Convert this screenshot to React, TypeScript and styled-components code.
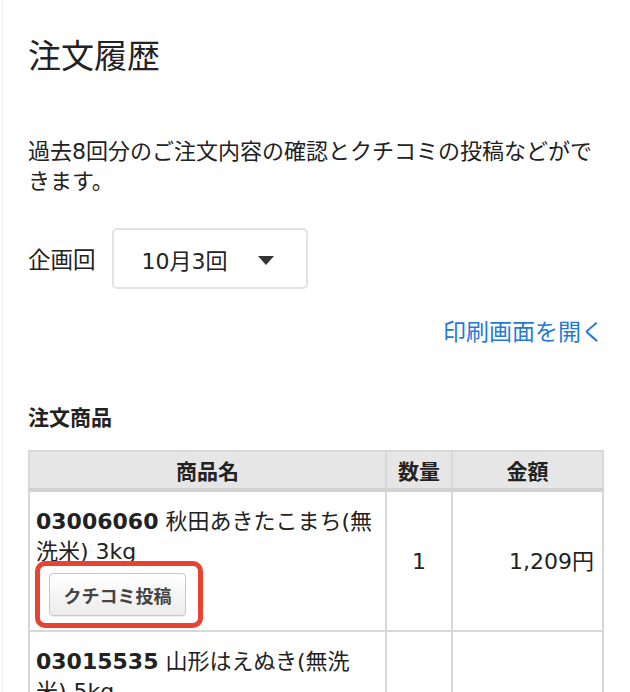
import styled, { createGlobalStyle } from "styled-components";
////////////////////////////////////////////////////////////////////////////////

const GlobalStyle = createGlobalStyle`
  html, body {
    margin: 0;
    padding: 0;
    background: #fff;
  }
  body {
    font-family: "DejaVu Sans", "Noto Sans CJK JP", sans-serif;
    color: #222;
  }
`;

type Item = {
  code: string;
  name: string;
  qty: string;
  price: string;
  highlight?: boolean;
};

const items: Item[] = [
  {
    code: "03006060",
    name: "秋田あきたこまち(無洗米) 3kg",
    qty: "1",
    price: "1,209円",
    highlight: true,
  },
  {
    code: "03015535",
    name: "山形はえぬき(無洗米) 5kg",
    qty: "1",
    price: "1,880円",
  },
];

export default function App() {
  return (
    <>
      <GlobalStyle />
      <Page>
        <Title>注文履歴</Title>
        <Lead>
          過去8回分のご注文内容の確認とクチコミの投稿などができます。
        </Lead>

        <SelectRow>
          <Label>企画回</Label>
          <Select>
            <span>10月3回</span>
            <Caret />
          </Select>
        </SelectRow>

        <LinkRow>
          <PrintLink href="#">印刷画面を開く</PrintLink>
        </LinkRow>

        <SectionTitle>注文商品</SectionTitle>

        <Table>
          <colgroup>
            <col style={{ width: 357 }} />
            <col style={{ width: 66 }} />
            <col />
          </colgroup>
          <thead>
            <tr>
              <Th>商品名</Th>
              <Th>数量</Th>
              <Th>金額</Th>
            </tr>
          </thead>
          <tbody>
            {items.map((item) => (
              <tr key={item.code}>
                <NameCell>
                  <Code>{item.code}</Code> {item.name}
                  <ButtonWrap>
                    <ReviewButton>クチコミ投稿</ReviewButton>
                    {item.highlight && <Highlight />}
                  </ButtonWrap>
                </NameCell>
                <Td $align="center">{item.qty}</Td>
                <Td $align="right">{item.price}</Td>
              </tr>
            ))}
          </tbody>
        </Table>
      </Page>
    </>
  );
}

const Page = styled.div`
  margin-left: 2px;
  border-left: 1px solid #f0f0f0;
  padding: 37px 26px 40px 25px;
  min-height: 100vh;
  box-sizing: border-box;
`;

const Title = styled.h1`
  margin: 0;
  font-size: 33px;
  font-weight: normal;
  line-height: 40px;
  color: #222;
`;

const Lead = styled.p`
  margin: 60px 0 0;
  font-size: 22px;
  line-height: 30px;
  color: #222;
`;

const SelectRow = styled.div`
  display: flex;
  align-items: center;
  gap: 16px;
  margin-top: 31px;
`;

const Label = styled.span`
  font-size: 22.5px;
  line-height: 30px;
  padding-top: 3px;
`;

const Select = styled.div`
  display: flex;
  align-items: center;
  justify-content: space-between;
  box-sizing: border-box;
  width: 196px;
  height: 61px;
  padding: 0 32px 0 28px;
  border: 2px solid #e2e2e2;
  border-radius: 5px;
  font-size: 22px;
  color: #222;
`;

const Caret = styled.span`
  width: 0;
  height: 0;
  margin-top: 4px;
  border-left: 8.5px solid transparent;
  border-right: 8.5px solid transparent;
  border-top: 9px solid #333;
`;

const LinkRow = styled.div`
  display: flex;
  justify-content: flex-end;
  margin-top: 28px;
`;

const PrintLink = styled.a`
  font-size: 23px;
  line-height: 30px;
  color: #1f7bd4;
  text-decoration: none;
`;

const SectionTitle = styled.h2`
  margin: 56px 0 0;
  font-size: 21px;
  font-weight: bold;
  line-height: 30px;
  color: #222;
`;

const Table = styled.table`
  width: 100%;
  margin-top: 17px;
  border-collapse: collapse;
  table-layout: fixed;
  font-size: 22px;
  color: #222;
`;

const Th = styled.th`
  height: 36px;
  padding: 0;
  background: #e6e6e6;
  border: 2px solid #d8d8d8;
  border-bottom: 4px solid #d2d2d2;
  font-size: 21px;
  font-weight: bold;
  text-align: center;
  vertical-align: middle;
`;

const Td = styled.td<{ $align: "center" | "right" }>`
  padding: 15px 8px 14px;
  border: 2px solid #d8d8d8;
  line-height: 30px;
  text-align: ${(p) => p.$align};
  vertical-align: middle;
`;

const NameCell = styled.td`
  padding: 15px 9px 14px 6px;
  border: 2px solid #d8d8d8;
  line-height: 30px;
  vertical-align: top;
`;

const Code = styled.b`
  font-weight: bold;
`;

const ButtonWrap = styled.div`
  position: relative;
  display: block;
  width: fit-content;
  margin: 6px 0 0 13px;
`;

const ReviewButton = styled.button`
  display: flex;
  align-items: center;
  justify-content: center;
  box-sizing: border-box;
  width: 137px;
  height: 43px;
  padding: 0;
  font-family: "Noto Sans CJK JP", sans-serif;
  font-size: 18px;
  font-weight: bold;
  color: #444;
  background: linear-gradient(#ffffff, #ececec);
  border: 1px solid #c9c9c9;
  border-radius: 4px;
  box-shadow: 0 1px 1px rgba(0, 0, 0, 0.08);
`;

const Highlight = styled.span`
  position: absolute;
  top: -12px;
  left: -14px;
  right: -17px;
  bottom: -12px;
  border: 5px solid #ea4230;
  border-radius: 10px;
  pointer-events: none;
`;
